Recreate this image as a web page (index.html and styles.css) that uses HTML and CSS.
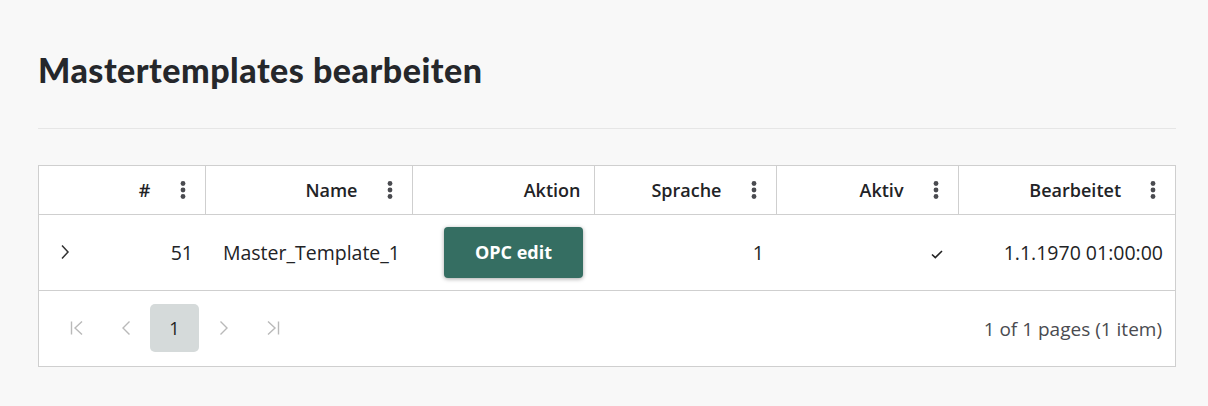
FILE: index.html
```html
<!DOCTYPE html>
<html lang="de">
<head>
<meta charset="utf-8">
<title>Mastertemplates bearbeiten</title>
<link rel="stylesheet" href="styles.css">
</head>
<body>
<div class="page">
  <h1 class="title">Mastertemplates bearbeiten</h1>
  <div class="divider"></div>
  <div class="grid">
    <table class="table">
      <colgroup>
        <col class="w-id"><col class="w-name"><col class="w-aktion"><col class="w-sprache"><col class="w-aktiv"><col class="w-bearb">
      </colgroup>
      <thead>
        <tr>
          <th><div class="hcell"><span>#</span><span class="kebab"><svg width="6" height="18" viewBox="0 0 6 18"><circle cx="3" cy="2.5" r="2.4"/><circle cx="3" cy="9" r="2.4"/><circle cx="3" cy="15.5" r="2.4"/></svg></span></div></th>
          <th><div class="hcell"><span>Name</span><span class="kebab"><svg width="6" height="18" viewBox="0 0 6 18"><circle cx="3" cy="2.5" r="2.4"/><circle cx="3" cy="9" r="2.4"/><circle cx="3" cy="15.5" r="2.4"/></svg></span></div></th>
          <th class="no-menu"><div class="hcell"><span>Aktion</span></div></th>
          <th><div class="hcell"><span>Sprache</span><span class="kebab"><svg width="6" height="18" viewBox="0 0 6 18"><circle cx="3" cy="2.5" r="2.4"/><circle cx="3" cy="9" r="2.4"/><circle cx="3" cy="15.5" r="2.4"/></svg></span></div></th>
          <th><div class="hcell"><span>Aktiv</span><span class="kebab"><svg width="6" height="18" viewBox="0 0 6 18"><circle cx="3" cy="2.5" r="2.4"/><circle cx="3" cy="9" r="2.4"/><circle cx="3" cy="15.5" r="2.4"/></svg></span></div></th>
          <th><div class="hcell"><span>Bearbeitet</span><span class="kebab"><svg width="6" height="18" viewBox="0 0 6 18"><circle cx="3" cy="2.5" r="2.4"/><circle cx="3" cy="9" r="2.4"/><circle cx="3" cy="15.5" r="2.4"/></svg></span></div></th>
        </tr>
      </thead>
      <tbody>
        <tr class="row">
          <td><div class="idcell"><span class="expander"><svg width="10" height="16" viewBox="0 0 10 16"><path d="M2 1.5 L8 8 L2 14.5" fill="none" stroke="#333" stroke-width="1.5"/></svg></span><span>51</span></div></td>
          <td>Master_Template_1</td>
          <td class="action"><button class="btn">OPC edit</button></td>
          <td>1</td>
          <td><svg class="check" width="12" height="9" viewBox="0 0 12 9"><path d="M1 4.5 L4.3 7.6 L11 1" fill="none" stroke="#222" stroke-width="1.6"/></svg></td>
          <td>1.1.1970 01:00:00</td>
        </tr>
        <tr class="pager-row">
          <td colspan="6">
            <div class="pager">
              <div class="pages">
                <span class="pg disabled"><svg width="14" height="14" viewBox="0 0 14 14"><path d="M1.5 0.5 V13.5 M12 0.5 L5 7 L12 13.5" fill="none" stroke="currentColor" stroke-width="1.4"/></svg></span>
                <span class="pg disabled"><svg width="10" height="14" viewBox="0 0 10 14"><path d="M8.5 0.5 L2 7 L8.5 13.5" fill="none" stroke="currentColor" stroke-width="1.4"/></svg></span>
                <span class="pg current">1</span>
                <span class="pg disabled"><svg width="10" height="14" viewBox="0 0 10 14"><path d="M1.5 0.5 L8 7 L1.5 13.5" fill="none" stroke="currentColor" stroke-width="1.4"/></svg></span>
                <span class="pg disabled"><svg width="14" height="14" viewBox="0 0 14 14"><path d="M12.5 0.5 V13.5 M2 0.5 L9 7 L2 13.5" fill="none" stroke="currentColor" stroke-width="1.4"/></svg></span>
              </div>
              <div class="info">1 of 1 pages (1 item)</div>
            </div>
          </td>
        </tr>
      </tbody>
    </table>
  </div>
</div>
</body>
</html>
```

FILE: styles.css
```css
* { box-sizing: border-box; }
html, body { margin: 0; padding: 0; }
body {
  background: #f8f8f8;
  font-family: "Open Sans", "Noto Sans", sans-serif;
  color: #222326;
}
.page {
  padding: 42px 32px 0 38px;
}
.title {
  margin: 0;
  font-family: "Lato", "Open Sans", sans-serif;
  font-weight: 900;
  font-size: 34px;
  line-height: 56px;
  color: #25272b;
  letter-spacing: 0.5px;
}
.divider {
  margin-top: 30px;
  height: 1px;
  background: #e6e6e6;
}
.grid {
  margin-top: 36px;
  background: #fff;
  border: 1px solid #cfcfcf;
}
.table {
  width: 100%;
  border-collapse: collapse;
  table-layout: fixed;
}
.w-id { width: 166px; }
.w-name { width: 207px; }
.w-aktion { width: 182px; }
.w-sprache { width: 182px; }
.w-aktiv { width: 182px; }
.w-bearb { width: auto; }

th {
  height: 48px;
  padding: 0 11px 0 0;
  border-right: 1px solid #cfcfcf;
  border-bottom: 1px solid #cfcfcf;
  font-weight: 600;
  font-size: 18px;
  text-align: right;
  color: #222326;
}
th:last-child { border-right: none; }
th.no-menu { padding-right: 13px; }
.hcell {
  display: flex;
  align-items: center;
  justify-content: flex-end;
}
.kebab {
  width: 22px;
  margin-left: 21px;
  display: flex;
  justify-content: center;
  fill: #4a4b50;
}
.kebab svg { display: block; }

.row td {
  height: 76px;
  padding: 0 12px;
  text-align: right;
  font-size: 19.5px;
  border-bottom: 1px solid #cfcfcf;
}
.row td.action { padding-right: 11px; }
.idcell {
  display: flex;
  align-items: center;
  justify-content: space-between;
  padding-left: 9px;
}
.expander svg { display: block; }
.check { display: inline-block; vertical-align: middle; margin-right: 3px; }
.btn {
  width: 139px;
  height: 51px;
  border: none;
  border-radius: 4px;
  background: #356e62;
  color: #fff;
  font-family: "Open Sans", sans-serif;
  font-weight: 700;
  font-size: 18px;
  box-shadow: 0 1px 4px rgba(0,0,0,0.35);
  cursor: pointer;
}

.pager-row td {
  height: 76px;
  padding: 0 13px;
}
.pager {
  display: flex;
  align-items: center;
  justify-content: space-between;
  padding-top: 2px;
}
.pages {
  display: flex;
  align-items: center;
  margin-top: -3px;
}
.pg {
  width: 49px;
  height: 48px;
  display: flex;
  align-items: center;
  justify-content: center;
  border-radius: 5px;
  color: #b9b9b9;
}
.pg svg { display: block; }
.pg.current {
  background: #d5dada;
  color: #222;
  font-size: 18px;
}
.info {
  font-size: 19px;
  color: #4a4b50;
}
```
